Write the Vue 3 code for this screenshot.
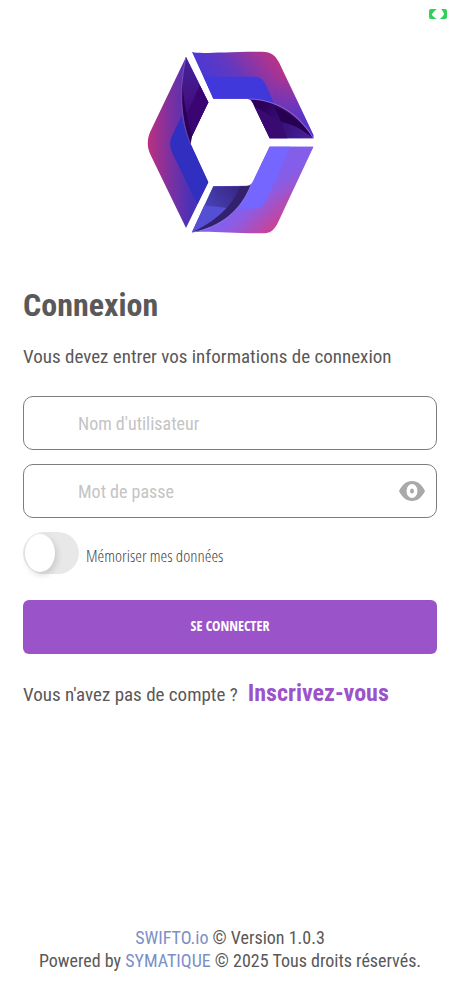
<script setup>
import { ref } from 'vue';

const username = ref('');
const password = ref('');
const remember = ref(false);
const showPassword = ref(false);
</script>

<template>
  <div class="login-page">
    <div class="status-bar">
      <svg class="battery" viewBox="0 0 18 10" aria-hidden="true">
        <path d="M2 0H8C6 1 4 4 3 5S6 9 8 10H2Q0 10 0 8V2Q0 0 2 0Z" fill="#30d158" />
        <path d="M12 0H16Q18 0 18 2V8Q18 10 16 10H11C13 8 15 6 15 5S14 2 12 0Z" fill="#30d158" />
      </svg>
    </div>

    <svg class="logo" viewBox="20 34 501 549" preserveAspectRatio="none" aria-hidden="true">
      <defs>
        <linearGradient id="topFace" gradientUnits="userSpaceOnUse" x1="250" y1="180" x2="400" y2="50">
          <stop offset="0" stop-color="#4a38d6" />
          <stop offset="0.4" stop-color="#6238c0" />
          <stop offset="1" stop-color="#b93388" />
        </linearGradient>
        <linearGradient id="topEdge" gradientUnits="userSpaceOnUse" x1="430" y1="110" x2="490" y2="240">
          <stop offset="0" stop-color="#6f38b8" stop-opacity="0" />
          <stop offset="1" stop-color="#5336d0" />
        </linearGradient>
        <linearGradient id="leftFace" gradientUnits="userSpaceOnUse" x1="22" y1="309" x2="155" y2="309">
          <stop offset="0" stop-color="#bb3080" />
          <stop offset="0.5" stop-color="#7d31a0" />
          <stop offset="1" stop-color="#4830b8" />
        </linearGradient>
        <linearGradient id="bottomFace" gradientUnits="userSpaceOnUse" x1="300" y1="430" x2="415" y2="560">
          <stop offset="0" stop-color="#7a62fa" />
          <stop offset="0.45" stop-color="#8b5de5" />
          <stop offset="1" stop-color="#cd4092" />
        </linearGradient>
        <linearGradient id="bottomEdge" gradientUnits="userSpaceOnUse" x1="460" y1="480" x2="460" y2="321">
          <stop offset="0" stop-color="#825eea" stop-opacity="0" />
          <stop offset="1" stop-color="#825eea" />
        </linearGradient>
        <linearGradient id="topFold" gradientUnits="userSpaceOnUse" x1="350" y1="230" x2="510" y2="290">
          <stop offset="0" stop-color="#2b0059" />
          <stop offset="1" stop-color="#47229b" />
        </linearGradient>
        <linearGradient id="leftFold" gradientUnits="userSpaceOnUse" x1="140" y1="60" x2="155" y2="300">
          <stop offset="0" stop-color="#46229a" />
          <stop offset="0.5" stop-color="#431184" />
          <stop offset="1" stop-color="#2c0059" />
        </linearGradient>
        <linearGradient id="bottomFold" gradientUnits="userSpaceOnUse" x1="170" y1="560" x2="320" y2="440">
          <stop offset="0" stop-color="#5752d6" />
          <stop offset="0.5" stop-color="#4139a5" />
          <stop offset="1" stop-color="#392078" />
        </linearGradient>
      </defs>

      <!-- top ribbon -->
      <path d="M155 37C185 44 250 35 365 36C394 37 406 47 417 70L519 286V296H388L342 200C335 184 330 177 315 177H219Z" fill="url(#topFace)" />
      <path d="M400 80L425 85L519 286V296C490 240 450 205 400 189Z" fill="url(#topEdge)" />
      <path d="M190 111H342C360 111 368 119 377 137L401 191C375 181 350 177 328 177H219Z" fill="#4038db" />
      <path d="M328 178C410 181 475 223 519 296H388L342 200C337 187 334 182 328 178Z" fill="url(#topFold)" />
      <path d="M401 199C449 216 490 252 519 296C485 268 455 252 422 246Z" fill="#270052" />
      <path d="M342 200L422 246L441 296H388Z" fill="#390b70" />
      <path d="M328 178C410 181 475 223 519 296" fill="none" stroke="#a68de5" stroke-width="2" />

      <!-- left ribbon -->
      <path d="M137 52L204 188L155 290C149 303 149 309 154 320L204 428L137 565L29 342C20 322 20 300 29 278Z" fill="url(#leftFace)" />
      <path d="M124 228C130 260 140 290 152 315L204 428L171 494L96 340C87 320 87 304 96 287Z" fill="#302fbf" />
      <path d="M137 52L204 188L155 290C151 298 150 304 151 314C119 240 117 140 137 52Z" fill="url(#leftFold)" />
      <path d="M178 137L204 188L155 290L136 232Z" fill="#3a0472" />
      <path d="M128 110C124 155 134 211 155 290L151 314C123 245 119 170 128 110Z" fill="#2b0056" />
      <path d="M137 52C117 140 119 240 151 314" fill="none" stroke="#8a66c9" stroke-width="2" />

      <!-- bottom ribbon -->
      <path d="M388 321H519L414 546C402 571 392 581 365 581C280 581 190 572 155 578L219 440L315 438C334 438 338 426 345 411Z" fill="url(#bottomFace)" />
      <path d="M388 321H519L450 469L330 440Z" fill="url(#bottomEdge)" />
      <path d="M388 321H450L380 477C369 500 360 507 340 507H278L332 437C338 430 340 422 345 411Z" fill="#7566ff" />
      <path d="M155 578L219 440H315C322 440 328 438 332 435C304 511 239 565 155 578Z" fill="url(#bottomFold)" />
      <path d="M192 497L262 505C231 537 197 562 155 578Z" fill="#554fd3" />
      <path d="M300 440H315C322 440 328 438 332 435C304 511 239 565 155 578C215 551 275 505 300 440Z" fill="#33206f" />
      <path d="M332 435C304 511 239 565 155 578" fill="none" stroke="#ad98f4" stroke-width="2" />
    </svg>

    <form class="login-form" @submit.prevent>
      <h1>Connexion</h1>
      <p class="subtitle">Vous devez entrer vos informations de connexion</p>

      <div class="field">
        <input v-model="username" type="text" placeholder="Nom d'utilisateur" aria-label="Nom d'utilisateur" />
      </div>
      <div class="field">
        <input
          v-model="password"
          :type="showPassword ? 'text' : 'password'"
          placeholder="Mot de passe"
          aria-label="Mot de passe"
        />
        <button type="button" class="eye" aria-label="Afficher le mot de passe" @click="showPassword = !showPassword">
          <svg viewBox="0 0 26 20">
            <path d="M0 10C3 4 7 0 13 0S23 4 26 10C23 16 19 20 13 20S3 16 0 10Z" fill="#a9a9a9" />
            <ellipse cx="13" cy="10" rx="5.5" ry="7" fill="#fff" />
            <ellipse cx="13" cy="10" rx="2" ry="2.5" fill="#a9a9a9" />
          </svg>
        </button>
      </div>

      <label class="remember">
        <input v-model="remember" type="checkbox" role="switch" />
        <span>Mémoriser mes données</span>
      </label>

      <button type="submit" class="submit">SE CONNECTER</button>

      <p class="signup">Vous n'avez pas de compte ? <a href="#">Inscrivez-vous</a></p>
    </form>

    <footer>
      <div><a href="#">SWIFTO.io</a> © Version 1.0.3</div>
      <div>Powered by <a href="#">SYMATIQUE</a> © 2025 Tous droits réservés.</div>
    </footer>
  </div>
</template>

<style>
body {
  margin: 0;
  background: #fff;
}
</style>

<style scoped>
.login-page {
  display: flex;
  flex-direction: column;
  box-sizing: border-box;
  min-height: 100vh;
  padding: 0 23px 27px;
  color: #5a5858;
  font-family: "Roboto Condensed", Roboto, "Liberation Sans", sans-serif;
  font-size: 19px;
}
.status-bar {
  display: flex;
  justify-content: flex-end;
  height: 51px;
  margin-right: -10px;
}
.battery {
  width: 18px;
  height: 10px;
  margin-top: 9px;
}
.logo {
  align-self: center;
  width: 167px;
  height: 183px;
}
.login-form {
  display: flex;
  flex-direction: column;
}
h1 {
  margin: 52px 0 0;
  font-size: 32px;
  line-height: 38px;
  font-weight: 700;
}
.subtitle {
  margin: 20px 0 26px;
  line-height: 26px;
}
.field {
  display: flex;
  align-items: center;
  box-sizing: border-box;
  height: 54px;
  margin-bottom: 14px;
  padding: 0 11px 0 54px;
  border: 1px solid #7d7d7d;
  border-radius: 10px;
  font-size: 18px;
}
.field input {
  flex: 1;
  min-width: 0;
  padding: 0;
  border: none;
  outline: none;
  background: none;
  color: inherit;
  font: inherit;
}
.field input::placeholder {
  color: #c4c4c4;
  opacity: 1;
}
.eye {
  display: flex;
  padding: 0;
  border: none;
  background: none;
}
.eye svg {
  width: 26px;
  height: 20px;
}
.remember {
  display: flex;
  align-items: center;
  gap: 7px;
  color: #444;
  font-family: "Open Sans Condensed Light", "Roboto Condensed", sans-serif;
  font-size: 17px;
}
.remember span {
  padding-top: 4px;
}
.remember input {
  appearance: none;
  flex: none;
  box-sizing: border-box;
  width: 56px;
  height: 42px;
  margin: 0;
  padding: 2px;
  border-radius: 21px;
  background: #e8e8e8;
}
.remember input::before {
  content: "";
  display: block;
  width: 30px;
  height: 38px;
  border-radius: 50%;
  background: #fff;
  box-shadow: 2px 3px 6px rgba(0, 0, 0, 0.14);
}
.remember input:checked {
  background: #9b53c9;
}
.remember input:checked::before {
  margin-left: auto;
}
.submit {
  height: 54px;
  margin-top: 26px;
  padding: 0 0 4px;
  border: none;
  border-radius: 6px;
  background: #9b53c9;
  color: #fff;
  font-family: "Open Sans Condensed", "Roboto Condensed", sans-serif;
  font-size: 14px;
  font-weight: 700;
}
.signup {
  display: flex;
  align-items: baseline;
  gap: 10px;
  margin: 24px 0 0;
  line-height: 30px;
}
.signup a {
  color: #9b53c9;
  font-size: 24px;
  font-weight: 700;
  text-decoration: none;
}
footer {
  margin-top: auto;
  font-size: 18px;
  line-height: 23px;
  text-align: center;
}
footer a {
  color: #7b90c8;
  text-decoration: none;
}
</style>
